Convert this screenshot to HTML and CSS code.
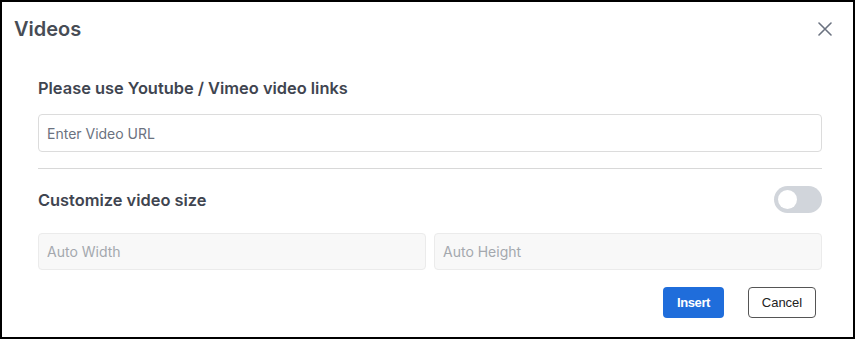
FILE: index.html
```html
<!DOCTYPE html>
<html lang="en">
<head>
    <meta charset="UTF-8">
    <meta name="viewport" content="width=device-width, initial-scale=1.0">
    <title>Videos</title>
    <link rel="stylesheet" href="styles.css">
</head>
<body>
    <div class="modal">
        <div class="modal-header">
            <h2 class="modal-title">Videos</h2>
            <button class="close-btn" aria-label="Close">
                <svg width="14" height="14" viewBox="0 0 14 14"><path d="M1 1L13 13M13 1L1 13" stroke="#6b7280" stroke-width="1.6" stroke-linecap="round"/></svg>
            </button>
        </div>
        <div class="modal-body">
            <label class="field-label">Please use Youtube / Vimeo video links</label>
            <input type="text" class="text-input url-input" placeholder="Enter Video URL">
            <hr class="divider">
            <div class="size-row">
                <span class="field-label">Customize video size</span>
                <span class="toggle"><span class="knob"></span></span>
            </div>
            <div class="size-inputs">
                <input type="text" class="text-input disabled" placeholder="Auto Width" disabled>
                <input type="text" class="text-input disabled" placeholder="Auto Height" disabled>
            </div>
            <div class="modal-footer">
                <button class="btn btn-primary">Insert</button>
                <button class="btn btn-outline">Cancel</button>
            </div>
        </div>
    </div>
</body>
</html>
```

FILE: styles.css
```css
* { box-sizing: border-box; }
body { margin: 0; font-family: Inter, "Noto Sans", sans-serif; }
.modal { width: 855px; height: 339px; border: 2px solid #000; background: #fff; }
.modal-header { display: flex; justify-content: space-between; align-items: center; padding: 15px 21px 0 12px; }
.modal-title { margin: 0; font-size: 20px; line-height: 24px; font-weight: 600; color: #474c55; }
.close-btn { background: none; border: none; padding: 0; width: 14px; height: 14px; cursor: pointer; display: flex; }
.modal-body { padding: 0 31px 0 36px; }
.field-label { display: block; font-size: 16.4px; line-height: 20px; font-weight: 600; color: #3f4550; }
.modal-body > .field-label { margin-top: 37px; }
.text-input { display: block; width: 100%; height: 38px; border: 1px solid #dcdcdc; border-radius: 4px; padding: 0 8px; font-family: Inter, sans-serif; font-size: 14px; color: #333; background: #fff; }
.text-input::placeholder { color: #6b7280; }
.url-input { margin-top: 16px; }
.divider { border: none; border-top: 1px solid #d8d8d8; margin: 16px 0 0; }
.size-row { display: flex; justify-content: space-between; align-items: center; margin-top: 17px; }
.toggle { width: 48px; height: 27px; border-radius: 14px; background: #d1d5db; padding: 4px; display: flex; }
.knob { width: 19px; height: 19px; border-radius: 50%; background: #fff; }
.size-inputs { display: grid; grid-template-columns: 1fr 1fr; gap: 8px; margin-top: 20px; }
.text-input.disabled { background: #f8f8f8; border-color: #ebebeb; height: 37px; }
.text-input.disabled::placeholder { color: #a4a8ae; }
.modal-footer { display: flex; justify-content: flex-end; gap: 24px; margin-top: 17px; padding-right: 6px; }
.btn { height: 31px; border-radius: 4px; font-family: "Liberation Sans", Arial, sans-serif; font-size: 13px; cursor: pointer; }
.btn-primary { width: 61px; background: #1f6ddb; color: #fff; border: none; font-weight: 700; letter-spacing: -0.4px; }
.btn-outline { width: 68px; background: #fff; color: #222; border: 1px solid #555; }
```
